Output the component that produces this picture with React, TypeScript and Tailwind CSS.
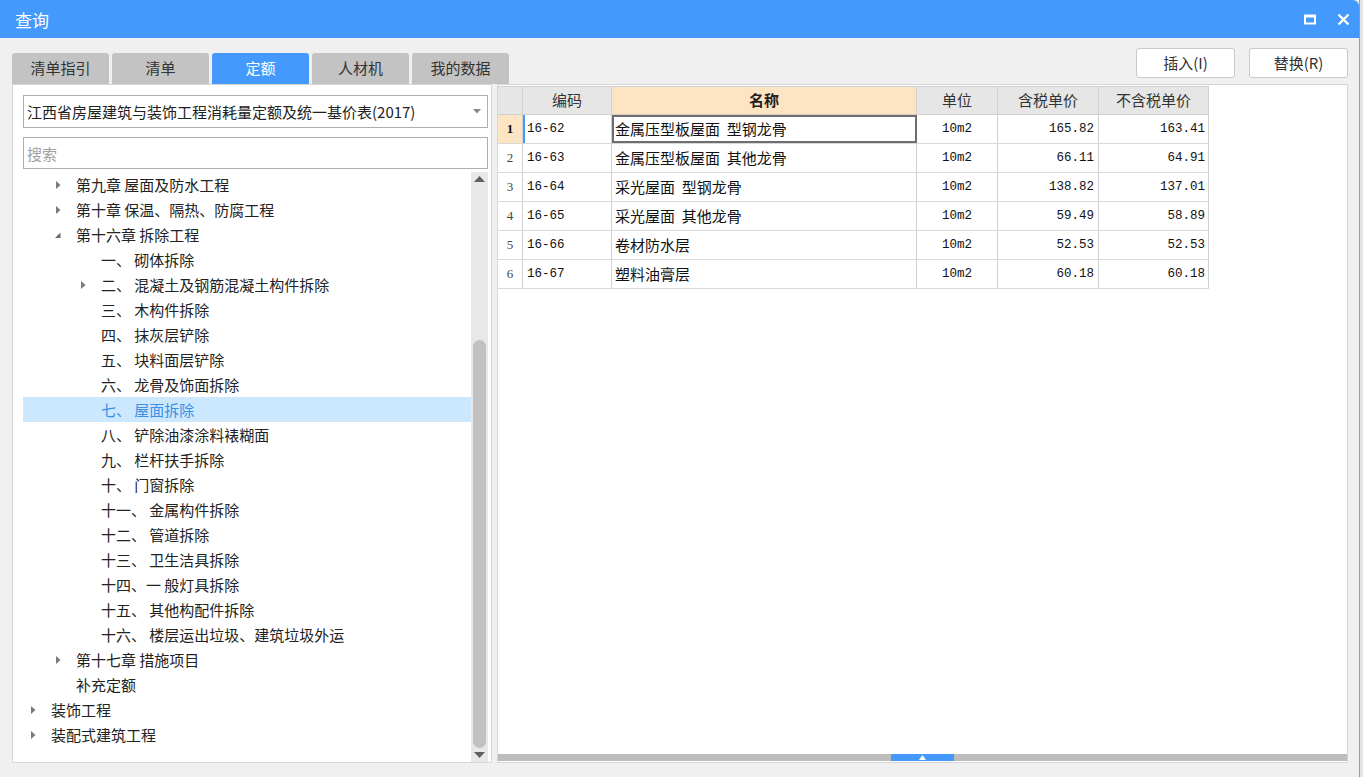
import React from 'react';

type TreeNode = {
  label: string;
  level: 0 | 1 | 2;
  arrow?: 'right' | 'down';
  selected?: boolean;
};

const treeNodes: TreeNode[] = [
  { label: '第九章 屋面及防水工程', level: 1, arrow: 'right' },
  { label: '第十章 保温、隔热、防腐工程', level: 1, arrow: 'right' },
  { label: '第十六章 拆除工程', level: 1, arrow: 'down' },
  { label: '一、 砌体拆除', level: 2 },
  { label: '二、 混凝土及钢筋混凝土构件拆除', level: 2, arrow: 'right' },
  { label: '三、 木构件拆除', level: 2 },
  { label: '四、 抹灰层铲除', level: 2 },
  { label: '五、 块料面层铲除', level: 2 },
  { label: '六、 龙骨及饰面拆除', level: 2 },
  { label: '七、 屋面拆除', level: 2, selected: true },
  { label: '八、 铲除油漆涂料裱糊面', level: 2 },
  { label: '九、 栏杆扶手拆除', level: 2 },
  { label: '十、 门窗拆除', level: 2 },
  { label: '十一、 金属构件拆除', level: 2 },
  { label: '十二、 管道拆除', level: 2 },
  { label: '十三、 卫生洁具拆除', level: 2 },
  { label: '十四、一 般灯具拆除', level: 2 },
  { label: '十五、 其他构配件拆除', level: 2 },
  { label: '十六、 楼层运出垃圾、建筑垃圾外运', level: 2 },
  { label: '第十七章 措施项目', level: 1, arrow: 'right' },
  { label: '补充定额', level: 1 },
  { label: '装饰工程', level: 0, arrow: 'right' },
  { label: '装配式建筑工程', level: 0, arrow: 'right' },
];

const levelPad: Record<number, string> = {
  0: 'pl-[4px]',
  1: 'pl-[29px]',
  2: 'pl-[54px]',
};

interface Row {
  code: string;
  name: string;
  unit: string;
  taxPrice: string;
  price: string;
}

const rows: Row[] = [
  { code: '16-62', name: '金属压型板屋面  型钢龙骨', unit: '10m2', taxPrice: '165.82', price: '163.41' },
  { code: '16-63', name: '金属压型板屋面  其他龙骨', unit: '10m2', taxPrice: '66.11', price: '64.91' },
  { code: '16-64', name: '采光屋面  型钢龙骨', unit: '10m2', taxPrice: '138.82', price: '137.01' },
  { code: '16-65', name: '采光屋面  其他龙骨', unit: '10m2', taxPrice: '59.49', price: '58.89' },
  { code: '16-66', name: '卷材防水层', unit: '10m2', taxPrice: '52.53', price: '52.53' },
  { code: '16-67', name: '塑料油膏层', unit: '10m2', taxPrice: '60.18', price: '60.18' },
];

const tabs = ['清单指引', '清单', '定额', '人材机', '我的数据'];

const TreeArrow: React.FC<{ dir?: 'right' | 'down' }> = ({ dir }) => (
  <span className="w-[12px] h-[12px] flex items-center justify-center shrink-0">
    {dir === 'right' && (
      <svg width="12" height="12" viewBox="0 0 12 12">
        <polygon points="4,2 8.5,6 4,10" fill="#7a7a7a" />
      </svg>
    )}
    {dir === 'down' && (
      <svg width="12" height="12" viewBox="0 0 12 12">
        <polygon points="8.5,3.5 8.5,9 3,9" fill="#6a6a6a" />
      </svg>
    )}
  </span>
);

const App: React.FC = () => {
  return (
    <div className="w-[1363px] h-[777px] bg-[#e4e4e4] flex font-['Noto_Sans_CJK_SC',sans-serif] overflow-hidden">
      <div className="w-[1360px] h-[777px] flex flex-col border-r border-[#9a9a9a] bg-[#f0f0f0]">
        {/* title bar */}
        <div className="h-[38px] bg-[#4499fd] rounded-tr-[6px] flex items-center pl-[15px] pr-[9px] shrink-0">
          <span className="text-white text-[17px] leading-none">查询</span>
          <div className="ml-auto flex items-center gap-[21px]">
            <svg width="12" height="11" viewBox="0 0 12 11">
              <rect x="1" y="1.5" width="10" height="8" fill="none" stroke="#fff" strokeWidth="2" />
              <rect x="1" y="1" width="10" height="2.5" fill="#fff" />
            </svg>
            <svg width="13" height="13" viewBox="0 0 13 13">
              <path d="M1.5 1.5 L11.5 11.5 M11.5 1.5 L1.5 11.5" stroke="#fff" strokeWidth="2.4" />
            </svg>
          </div>
        </div>

        {/* body */}
        <div className="flex-1 flex flex-col pl-[12px] pr-[11px] pb-[14px]">
          <div className="h-[46px] flex items-end shrink-0">
            <div className="flex gap-[3px]">
              {tabs.map((t) => (
                <div
                  key={t}
                  className={
                    t === '定额'
                      ? 'w-[97px] h-[31px] rounded-t-[3px] bg-[#4499fd] text-white text-[15px] flex items-center justify-center'
                      : 'w-[97px] h-[31px] rounded-t-[3px] bg-[#c3c3c3] text-[#333] text-[15px] flex items-center justify-center'
                  }
                >
                  {t}
                </div>
              ))}
            </div>
            <div className="ml-auto self-start mt-[10px] flex gap-[14px]">
              <button className="w-[99px] h-[30px] bg-white border border-[#c9c9c9] rounded-[3px] text-[15px] text-[#333]">
                插入(I)
              </button>
              <button className="w-[99px] h-[30px] bg-white border border-[#c9c9c9] rounded-[3px] text-[15px] text-[#333]">
                替换(R)
              </button>
            </div>
          </div>

          <div className="flex-1 flex gap-[5px] min-h-0">
            {/* left panel */}
            <div className="w-[480px] bg-white border border-[#d6d6d6] flex flex-col pl-[10px] pr-[3px] pt-[10px]">
              <div className="w-[465px] h-[33px] border border-[#adadad] flex items-center pl-[3px] pr-[6px]">
                <span className="text-[15px] text-[#222] leading-none">
                  江西省房屋建筑与装饰工程消耗量定额及统一基价表(2017)
                </span>
                <svg className="ml-auto" width="8" height="5" viewBox="0 0 8 5">
                  <polygon points="0,0 8,0 4,4.5" fill="#8a8a8a" />
                </svg>
              </div>
              <div className="w-[465px] h-[32px] border border-[#adadad] mt-[9px] flex items-center pl-[3px]">
                <span className="text-[15px] text-[#a0a0a0] leading-none">搜索</span>
              </div>
              <div className="flex-1 flex mt-[3px] min-h-0">
                <div className="w-[448px] flex flex-col">
                  {treeNodes.map((n) => (
                    <div
                      key={n.label}
                      className={`h-[25px] flex items-center shrink-0 ${levelPad[n.level]} ${
                        n.selected ? 'bg-[#cce8ff] text-[#3b8fe6]' : 'text-[#222]'
                      }`}
                    >
                      <TreeArrow dir={n.arrow} />
                      <span className="ml-[12px] text-[15px] leading-none whitespace-pre">{n.label}</span>
                    </div>
                  ))}
                </div>
                <div className="w-[17px] bg-[#e8e8e8] flex flex-col items-center">
                  <div className="h-[14px] flex items-center justify-center shrink-0">
                    <svg width="11" height="6" viewBox="0 0 11 6">
                      <polygon points="5.5,0 11,6 0,6" fill="#606060" />
                    </svg>
                  </div>
                  <div className="h-[154px] shrink-0" />
                  <div className="w-[13px] h-[408px] rounded-full bg-[#c1c1c1] shrink-0" />
                  <div className="flex-1" />
                  <div className="h-[14px] flex items-center justify-center shrink-0">
                    <svg width="11" height="6" viewBox="0 0 11 6">
                      <polygon points="0,0 11,0 5.5,6" fill="#606060" />
                    </svg>
                  </div>
                </div>
              </div>
            </div>

            {/* right panel */}
            <div className="w-[852px] bg-white border border-[#d6d6d6] flex flex-col">
              <div className="w-[711px] pt-[1px] flex flex-col">
                {/* header */}
                <div className="flex h-[29px] text-[15px] text-[#333] border-t border-b border-[#d0d0d0]">
                  <div className="w-[25px] bg-[#e6e6e6] border-r border-[#d0d0d0]" />
                  <div className="w-[89px] bg-[#e6e6e6] border-r border-[#d0d0d0] flex items-center justify-center">编码</div>
                  <div className="w-[305px] bg-[#fde4c3] border-r border-[#d0d0d0] flex items-center justify-center font-bold text-[#222]">名称</div>
                  <div className="w-[81px] bg-[#e6e6e6] border-r border-[#d0d0d0] flex items-center justify-center">单位</div>
                  <div className="w-[101px] bg-[#e6e6e6] border-r border-[#d0d0d0] flex items-center justify-center">含税单价</div>
                  <div className="w-[110px] bg-[#e6e6e6] border-r border-[#d0d0d0] flex items-center justify-center">不含税单价</div>
                </div>
                {rows.map((r, i) => (
                  <div key={r.code} className="flex h-[29px] border-b border-[#d9d9d9] text-[#111]">
                    <div
                      className={
                        i === 0
                          ? "w-[25px] bg-[#fde4c3] border-r border-[#d0d0d0] flex items-center justify-center font-['Liberation_Serif',serif] font-bold text-[13px]"
                          : "w-[25px] bg-white border-r border-[#d0d0d0] flex items-center justify-center font-['Liberation_Serif',serif] text-[13px] text-[#444]"
                      }
                    >
                      {i + 1}
                    </div>
                    <div
                      className={
                        i === 0
                          ? "w-[89px] border-l-2 border-l-[#4499fd] border-r border-[#d0d0d0] flex items-center pl-[2px] font-['Liberation_Mono',monospace] text-[12.5px]"
                          : "w-[89px] border-r border-[#d0d0d0] flex items-center pl-[4px] font-['Liberation_Mono',monospace] text-[12.5px]"
                      }
                    >
                      {r.code}
                    </div>
                    <div
                      className={
                        i === 0
                          ? 'w-[305px] border-2 border-[#6e6e6e] flex items-center pl-[1px] text-[15px] whitespace-pre'
                          : 'w-[305px] border-r border-[#d0d0d0] flex items-center pl-[3px] text-[15px] whitespace-pre'
                      }
                    >
                      {r.name}
                    </div>
                    <div className="w-[81px] border-r border-[#d0d0d0] flex items-center justify-center font-['Liberation_Mono',monospace] text-[12.5px]">
                      {r.unit}
                    </div>
                    <div className="w-[101px] border-r border-[#d0d0d0] flex items-center justify-end pr-[4px] font-['Liberation_Mono',monospace] text-[12.5px]">
                      {r.taxPrice}
                    </div>
                    <div className="w-[110px] border-r border-[#d0d0d0] flex items-center justify-end pr-[3px] font-['Liberation_Mono',monospace] text-[12.5px]">
                      {r.price}
                    </div>
                  </div>
                ))}
              </div>
              <div className="flex-1" />
              <div className="h-[7px] bg-[#bdbdbd] flex justify-center mb-[1px]">
                <div className="w-[63px] h-[7px] bg-[#4499fd] flex items-center justify-center">
                  <svg width="7" height="5" viewBox="0 0 7 5">
                    <polygon points="3.5,0 7,5 0,5" fill="#fff" />
                  </svg>
                </div>
              </div>
            </div>
          </div>
        </div>
      </div>
    </div>
  );
};

export default App;
